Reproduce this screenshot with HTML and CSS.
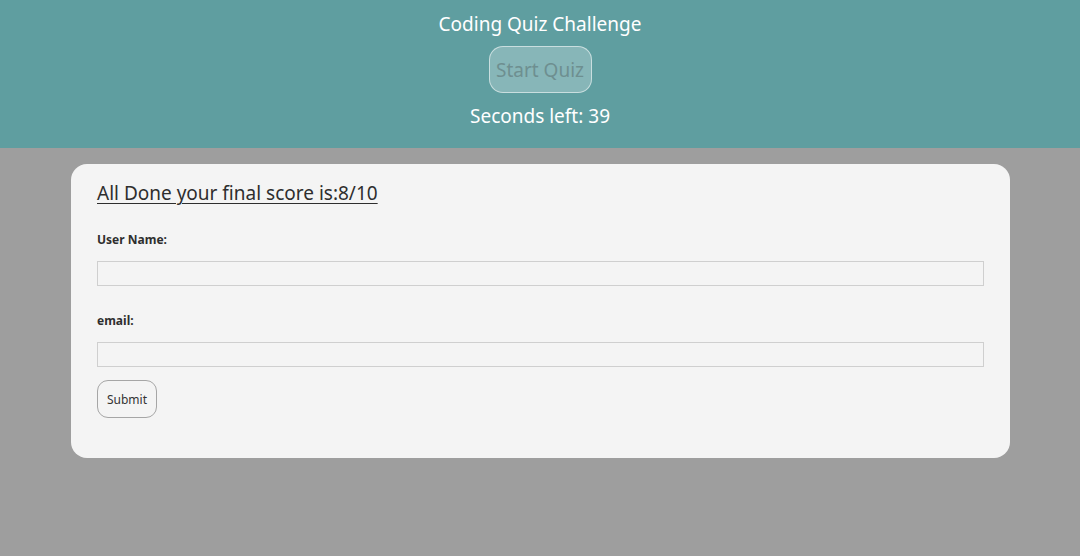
FILE: index.html
```html
<!DOCTYPE html>
<html>
<head>
<meta charset="utf-8">
<link rel="stylesheet" href="styles.css">
</head>
<body>
<header class="top">
  <h1 class="title">Coding Quiz Challenge</h1>
  <button class="start" disabled>Start Quiz</button>
  <div class="timer">Seconds left: 39</div>
</header>
<main class="card">
  <h2 class="score">All Done your final score is:8/10</h2>
  <form class="form">
    <label class="label" for="user">User Name:</label>
    <input class="field" id="user" type="text">
    <label class="label label2" for="email">email:</label>
    <input class="field" id="email" type="text">
    <button class="submit" type="button">Submit</button>
  </form>
</main>
</body>
</html>
```
FILE: styles.css
```css
* { box-sizing: border-box; }
html, body { margin: 0; padding: 0; }
body {
  background: #9e9e9e;
  font-family: "Noto Sans", "Open Sans", sans-serif;
  width: 1080px;
  height: 556px;
  overflow: hidden;
}
.top {
  background: #5f9ea0;
  height: 148px;
  display: flex;
  flex-direction: column;
  align-items: center;
  color: #fff;
  padding-top: 11px;
}
.title {
  margin: 0;
  font-weight: 400;
  font-size: 19px;
  line-height: 26px;
}
.start {
  margin-top: 9px;
  width: 103px;
  height: 47px;
  border-radius: 14px;
  border: 1px solid rgba(255,255,255,0.55);
  background: rgba(255,255,255,0.25);
  color: #6e8f90;
  font-family: inherit;
  font-size: 19px;
  padding: 0;
}
.timer {
  margin-top: 10px;
  font-size: 19px;
  line-height: 26px;
}
.card {
  margin: 16px 70px 0 71px;
  background: #f4f4f4;
  border-radius: 16px;
  height: 294px;
  padding: 15px 26px 0 26px;
}
.score {
  margin: 0;
  font-size: 19px;
  font-weight: 400;
  line-height: 28px;
  color: #2e2e2e;
  text-decoration: underline;
  text-underline-offset: 3px;
  text-decoration-thickness: 1px;
}
.form {
  display: flex;
  flex-direction: column;
  align-items: flex-start;
  margin-top: 24px;
}
.label {
  font-size: 12px;
  font-weight: 700;
  color: #2e2e2e;
  line-height: 18px;
}
.label2 { margin-top: 26px; }
.field {
  margin-top: 12px;
  width: 887px;
  height: 25px;
  border: 1px solid #cfcfcf;
  background: #f4f4f4;
}
.submit {
  margin-top: 13px;
  width: 60px;
  height: 38px;
  border: 1px solid #a6a6a6;
  border-radius: 11px;
  background: #f4f4f4;
  font-family: inherit;
  font-size: 12px;
  color: #333;
  padding: 0;
}
```
